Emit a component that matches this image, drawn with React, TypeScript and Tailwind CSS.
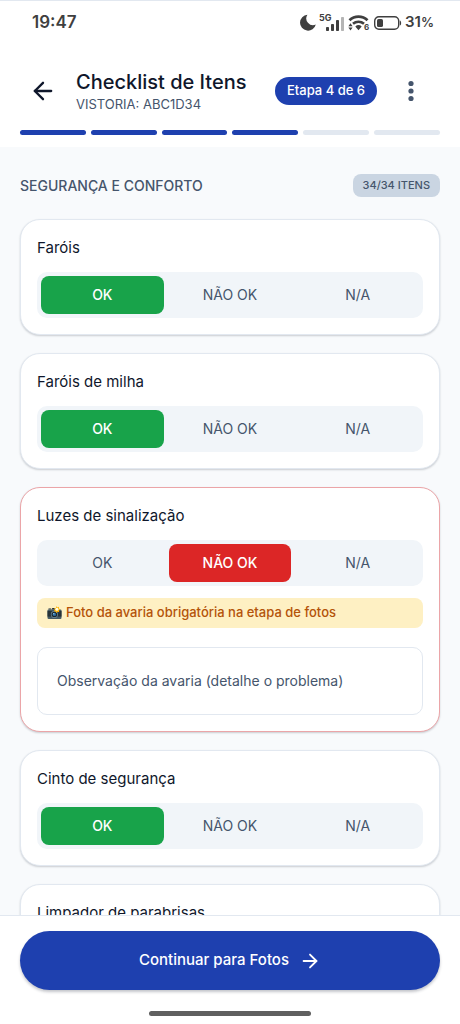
import React, { useState } from "react";
import { ArrowLeft, ArrowRight } from "lucide-react";
import clsx from "clsx";

type Status = "ok" | "nok" | "na";

interface ChecklistItem {
  id: string;
  name: string;
  status: Status;
}

const TOTAL_STEPS = 6;
const CURRENT_STEP = 4;

const OPTIONS: { value: Status; label: string }[] = [
  { value: "ok", label: "OK" },
  { value: "nok", label: "NÃO OK" },
  { value: "na", label: "N/A" },
];

const INITIAL_ITEMS: ChecklistItem[] = [
  { id: "farois", name: "Faróis", status: "ok" },
  { id: "farois-milha", name: "Faróis de milha", status: "ok" },
  { id: "luzes", name: "Luzes de sinalização", status: "nok" },
  { id: "cinto", name: "Cinto de segurança", status: "ok" },
  { id: "limpador", name: "Limpador de parabrisas", status: "ok" },
];

const activeClass: Record<Status, string> = {
  ok: "bg-[#18a34a] font-medium text-white",
  nok: "bg-[#dc2626] font-medium text-white",
  na: "bg-slate-500 font-medium text-white",
};

const StatusBar = () => (
  <div className="flex h-11 items-center justify-between border-t border-slate-200 pr-[26px] pl-8 text-[#3f3f3f]">
    <span className="text-[17px] font-semibold">19:47</span>
    <div className="flex items-center gap-[3px]">
      <svg width="16" height="17" viewBox="0 0 16 17" fill="currentColor">
        <path d="M7.400.7A8 8 0 1 0 15.800 10.600 6.800 6.800 0 0 1 7.400.7Z" />
      </svg>
      {/* sinal 5G */}
      <svg width="26" height="22" viewBox="0 0 26 22" fill="currentColor">
        <text x="0" y="9" fontSize="9" fontWeight="700">
          5G
        </text>
        <rect x="7" y="15" width="3" height="4" rx=".8" />
        <rect x="12" y="12" width="3" height="7" rx=".8" />
        <rect x="17" y="8" width="3" height="11" rx=".8" />
        <rect x="22" y="5" width="3" height="14" rx=".8" fill="#b4b4b4" />
      </svg>
      {/* wifi */}
      <svg width="22" height="20" viewBox="0 0 22 20" fill="none" stroke="currentColor">
        <path d="M1.5 7.2a13 13 0 0 1 18 0" strokeWidth="2.8" />
        <path d="M5 10.8a8.2 8.2 0 0 1 11 0" strokeWidth="2.6" />
        <path d="M7.3 13.4a4.8 4.8 0 0 1 6.4 0l-3.2 3.8Z" fill="currentColor" stroke="none" />
        <path d="M.4 13.3 2.5 10.2l2.1 3.1ZM.4 14.4l2.1 3.1 2.1-3.1Z" fill="currentColor" stroke="none" />
        <text x="16" y="17" fontSize="8" fontWeight="700" fill="currentColor" stroke="none">
          6
        </text>
      </svg>
      {/* bateria */}
      <svg width="29" height="16" viewBox="0 0 29 16" fill="none" stroke="currentColor">
        <rect x="1.7" y="1.7" width="24" height="12.6" rx="4.2" strokeWidth="1.4" />
        <rect x="4" y="4" width="6" height="8" rx="1.6" fill="currentColor" stroke="none" />
        <path d="M26.8 5.4c1.8.6 1.8 4.6 0 5.2Z" fill="currentColor" stroke="none" />
      </svg>
      <span className="text-[15px] font-semibold">
        31<span className="text-[13px]">%</span>
      </span>
    </div>
  </div>
);

const CameraIcon = () => (
  <svg width="15" height="14" viewBox="0 0 15 14" className="shrink-0">
    <path d="M1.5 3.6V2.4h2.6v1.2" fill="#37474f" />
    <rect x=".5" y="3.4" width="14" height="9.6" rx="1.2" fill="#455a64" />
    <path d="M4.4 3.6 5.4 2h4l1 1.6Z" fill="#263238" />
    <rect x=".5" y="5" width="14" height="5.6" fill="#263238" />
    <circle cx="7.4" cy="8.4" r="3.6" fill="#607d8b" />
    <circle cx="7.4" cy="8.4" r="2.7" fill="#1c262b" />
    <circle cx="7.4" cy="8.4" r="1.7" fill="#2d6fa3" />
    <circle cx="6.8" cy="7.7" r=".6" fill="#b3e5fc" />
    <path
      d="m9.3 0 .9 1.4L12 .7l-.2 1.800 1.600.8-1.500 1.100.4 1.800-1.800-.5-1.200 1.400-.7-1.700-1.800-.2 1.100-1.500-.8-1.600 1.800-.1Z"
      fill="#ffb300"
    />
    <circle cx="9.9" cy="3.3" r="1.5" fill="#fffde7" />
  </svg>
);

const ItemCard = ({
  item,
  onChange,
}: {
  item: ChecklistItem;
  onChange: (status: Status) => void;
}) => {
  const damaged = item.status === "nok";

  return (
    <section
      className={clsx(
        "rounded-[20px] border bg-white p-4 shadow-[0_1px_2px_rgba(15,23,42,0.2)]",
        damaged ? "border-[#eba5a8]" : "border-slate-200",
      )}
    >
      <h3 className="text-[15px] leading-6 text-slate-900">{item.name}</h3>
      <div className="mt-3 grid grid-cols-3 gap-[5px] rounded-[10px] bg-slate-100 p-1">
        {OPTIONS.map((option) => (
          <button
            key={option.value}
            type="button"
            aria-pressed={item.status === option.value}
            onClick={() => onChange(option.value)}
            className={clsx(
              "h-[38px] rounded-lg text-sm",
              item.status === option.value
                ? activeClass[option.value]
                : "text-slate-600",
            )}
          >
            {option.label}
          </button>
        ))}
      </div>
      {damaged && (
        <>
          <p className="mt-3 flex h-[30px] items-center gap-1 rounded-lg bg-[#fef0c3] px-2.5 text-[13px] font-medium text-[#b45309]">
            <CameraIcon />
            Foto da avaria obrigatória na etapa de fotos
          </p>
          <textarea
            rows={1}
            aria-label="Observação da avaria"
            placeholder="Observação da avaria (detalhe o problema)"
            className="mt-[19px] block h-[68px] w-full resize-none rounded-[10px] border border-slate-200 px-[19px] py-[23px] text-sm leading-5 text-slate-900 outline-none placeholder:text-slate-600"
          />
        </>
      )}
    </section>
  );
};

export default function App() {
  const [items, setItems] = useState(INITIAL_ITEMS);

  const updateStatus = (id: string, status: Status) => {
    setItems((prev) =>
      prev.map((item) => (item.id === id ? { ...item, status } : item)),
    );
  };

  return (
    <div className="flex h-dvh flex-col bg-slate-50 font-['Inter',sans-serif]">
      <header className="bg-white pb-3">
        <StatusBar />
        <div className="mt-4 flex h-[62px] items-center pr-[25px] pl-[19px]">
          <button
            type="button"
            aria-label="Voltar"
            className="flex size-12 items-center justify-center text-slate-900"
          >
            <ArrowLeft size={28} />
          </button>
          <div className="ml-[9px] min-w-0 flex-1">
            <h1 className="text-xl leading-[26px] font-medium whitespace-nowrap text-slate-900">
              Checklist de Itens
            </h1>
            <p className="text-[13px] leading-[18px] text-slate-600">
              VISTORIA: ABC1D34
            </p>
          </div>
          <span className="flex h-7 items-center rounded-full bg-[#1e40af] px-3 text-[13px] font-medium whitespace-nowrap text-white">
            Etapa {CURRENT_STEP} de {TOTAL_STEPS}
          </span>
          <button
            type="button"
            aria-label="Mais opções"
            className="ml-2.5 flex size-12 items-center justify-center text-slate-600"
          >
            <svg width="6" height="22" viewBox="0 0 6 22" fill="currentColor">
              <circle cx="3" cy="3.5" r="2.6" />
              <circle cx="3" cy="11" r="2.6" />
              <circle cx="3" cy="18.5" r="2.6" />
            </svg>
          </button>
        </div>
        <div className="mt-2 flex gap-[5px] px-5">
          {Array.from({ length: TOTAL_STEPS }, (_, i) => (
            <span
              key={i}
              className={clsx(
                "h-[5px] flex-1 rounded-full",
                i < CURRENT_STEP ? "bg-[#1e40af]" : "bg-slate-200",
              )}
            />
          ))}
        </div>
      </header>

      <main className="min-h-0 flex-1 overflow-y-auto px-5 pt-[27px] pb-5 [scrollbar-width:none]">
        <div className="mb-[22px] flex items-center justify-between">
          <h2 className="text-sm font-medium text-slate-600">
            SEGURANÇA E CONFORTO
          </h2>
          <span className="flex h-[23px] items-center rounded-lg bg-slate-300 px-2.5 text-[11px] font-medium text-slate-600">
            {"34/34 ITENS"}
          </span>
        </div>
        <div className="flex flex-col gap-[18px]">
          {items.map((item) => (
            <ItemCard
              key={item.id}
              item={item}
              onChange={(status) => updateStatus(item.id, status)}
            />
          ))}
        </div>
      </main>

      <footer className="border-t border-slate-200 bg-white px-5 pt-[15px] pb-2">
        <button
          type="button"
          className="flex h-[59px] w-full items-center justify-center gap-2.5 rounded-full bg-[#1e40af] text-[15px] font-medium text-white shadow-[0_2px_3px_rgba(15,23,42,0.25)]"
        >
          Continuar para Fotos
          <ArrowRight size={22} />
        </button>
        <div className="mx-auto mt-[21px] h-[5px] w-[162px] rounded-full bg-[#606060]" />
      </footer>
    </div>
  );
}
